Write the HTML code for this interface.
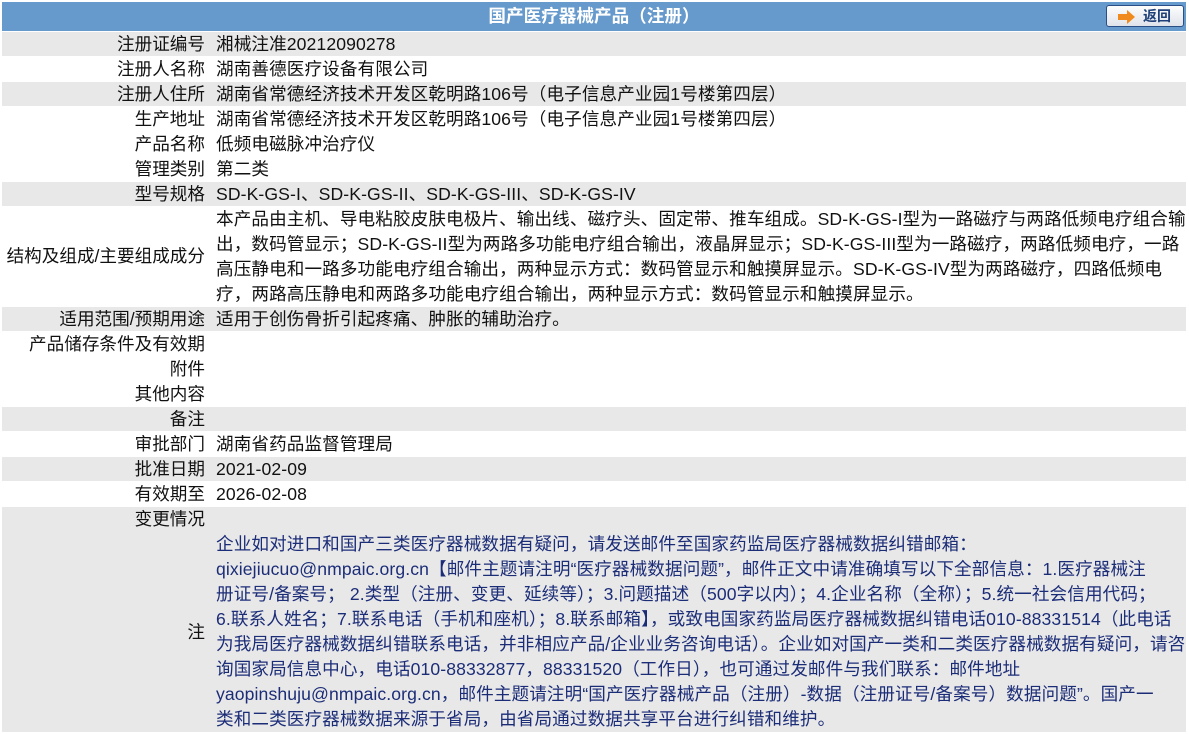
<!DOCTYPE html>
<html><head><meta charset="utf-8"><style>
*{margin:0;padding:0;box-sizing:border-box}
body{width:1189px;height:734px;background:#fff;font-family:"Liberation Sans","Noto Sans CJK SC",sans-serif;font-size:17.6px;color:#111;overflow:hidden;position:relative}
.hd{position:absolute;left:2px;top:2px;width:1184px;height:29px;background:#6699cc;color:#fff;font-weight:bold;text-align:center;line-height:29px;font-size:17.6px}
.btn{position:absolute;left:1106px;top:5px;width:78px;height:22px;border:1px solid #2a4f86;border-radius:3px;background:linear-gradient(#fdfdfd,#dfe3ea);color:#1e3f78;font-weight:bold;font-size:14px;line-height:20px;text-align:right;padding-right:12px}
.btn svg{position:absolute;left:10px;top:4px}
.r{position:absolute;left:2px;width:1184px;display:flex;line-height:25px}
.g{background:#e8e8e8}
.l{width:203px;text-align:right;white-space:nowrap;flex:none}
.v{padding-left:11px;white-space:nowrap;flex:1;letter-spacing:0.1px}
.n{color:#1c2d78}
</style></head><body>
<div class="hd">国产医疗器械产品（注册）</div>
<div class="btn"><svg width="20" height="14" viewBox="0 0 20 14"><path d="M1 4h9V0l8 7-8 7v-4H1z" fill="#f08a1c"/></svg>返回</div>

<div class="r g" style="top:32px;height:24px"><div class="l">注册证编号</div><div class="v">湘械注准20212090278</div></div>
<div class="r" style="top:57px;height:24px"><div class="l">注册人名称</div><div class="v">湖南善德医疗设备有限公司</div></div>
<div class="r g" style="top:82px;height:24px"><div class="l">注册人住所</div><div class="v">湖南省常德经济技术开发区乾明路106号（电子信息产业园1号楼第四层）</div></div>
<div class="r" style="top:107px;height:24px"><div class="l">生产地址</div><div class="v">湖南省常德经济技术开发区乾明路106号（电子信息产业园1号楼第四层）</div></div>
<div class="r" style="top:132px;height:24px"><div class="l">产品名称</div><div class="v">低频电磁脉冲治疗仪</div></div>
<div class="r" style="top:157px;height:24px"><div class="l">管理类别</div><div class="v">第二类</div></div>
<div class="r g" style="top:182px;height:24px"><div class="l">型号规格</div><div class="v">SD-K-GS-I、SD-K-GS-II、SD-K-GS-III、SD-K-GS-IV</div></div>
<div class="r" style="top:207px;height:99px;align-items:center"><div class="l">结构及组成/主要组成成分</div><div class="v">本产品由主机、导电粘胶皮肤电极片、输出线、磁疗头、固定带、推车组成。SD-K-GS-I型为一路磁疗与两路低频电疗组合输<br>出，数码管显示；SD-K-GS-II型为两路多功能电疗组合输出，液晶屏显示；SD-K-GS-III型为一路磁疗，两路低频电疗，一路<br>高压静电和一路多功能电疗组合输出，两种显示方式：数码管显示和触摸屏显示。SD-K-GS-IV型为两路磁疗，四路低频电<br>疗，两路高压静电和两路多功能电疗组合输出，两种显示方式：数码管显示和触摸屏显示。</div></div>
<div class="r g" style="top:307px;height:24px"><div class="l">适用范围/预期用途</div><div class="v">适用于创伤骨折引起疼痛、肿胀的辅助治疗。</div></div>
<div class="r" style="top:332px;height:24px"><div class="l">产品储存条件及有效期</div><div class="v"></div></div>
<div class="r" style="top:357px;height:24px"><div class="l">附件</div><div class="v"></div></div>
<div class="r" style="top:382px;height:24px"><div class="l">其他内容</div><div class="v"></div></div>
<div class="r g" style="top:407px;height:24px"><div class="l">备注</div><div class="v"></div></div>
<div class="r" style="top:432px;height:24px"><div class="l">审批部门</div><div class="v">湖南省药品监督管理局</div></div>
<div class="r g" style="top:457px;height:24px"><div class="l">批准日期</div><div class="v">2021-02-09</div></div>
<div class="r" style="top:482px;height:24px"><div class="l">有效期至</div><div class="v">2026-02-08</div></div>
<div class="r g" style="top:507px;height:225px;display:block"></div>
<div class="r" style="top:507px;height:25px"><div class="l">变更情况</div><div class="v"></div></div>
<div class="r" style="top:532px;height:200px;align-items:center"><div class="l">注</div><div class="v n">企业如对进口和国产三类医疗器械数据有疑问，请发送邮件至国家药监局医疗器械数据纠错邮箱：<br>qixiejiucuo@nmpaic.org.cn【邮件主题请注明“医疗器械数据问题”，邮件正文中请准确填写以下全部信息：1.医疗器械注<br>册证号/备案号； 2.类型（注册、变更、延续等）；3.问题描述（500字以内）；4.企业名称（全称）；5.统一社会信用代码；<br>6.联系人姓名；7.联系电话（手机和座机）；8.联系邮箱】，或致电国家药监局医疗器械数据纠错电话010-88331514（此电话<br>为我局医疗器械数据纠错联系电话，并非相应产品/企业业务咨询电话）。企业如对国产一类和二类医疗器械数据有疑问，请咨<br>询国家局信息中心，电话010-88332877，88331520（工作日），也可通过发邮件与我们联系：邮件地址<br>yaopinshuju@nmpaic.org.cn，邮件主题请注明“国产医疗器械产品（注册）-数据（注册证号/备案号）数据问题”。国产一<br>类和二类医疗器械数据来源于省局，由省局通过数据共享平台进行纠错和维护。</div></div>
</body></html>
